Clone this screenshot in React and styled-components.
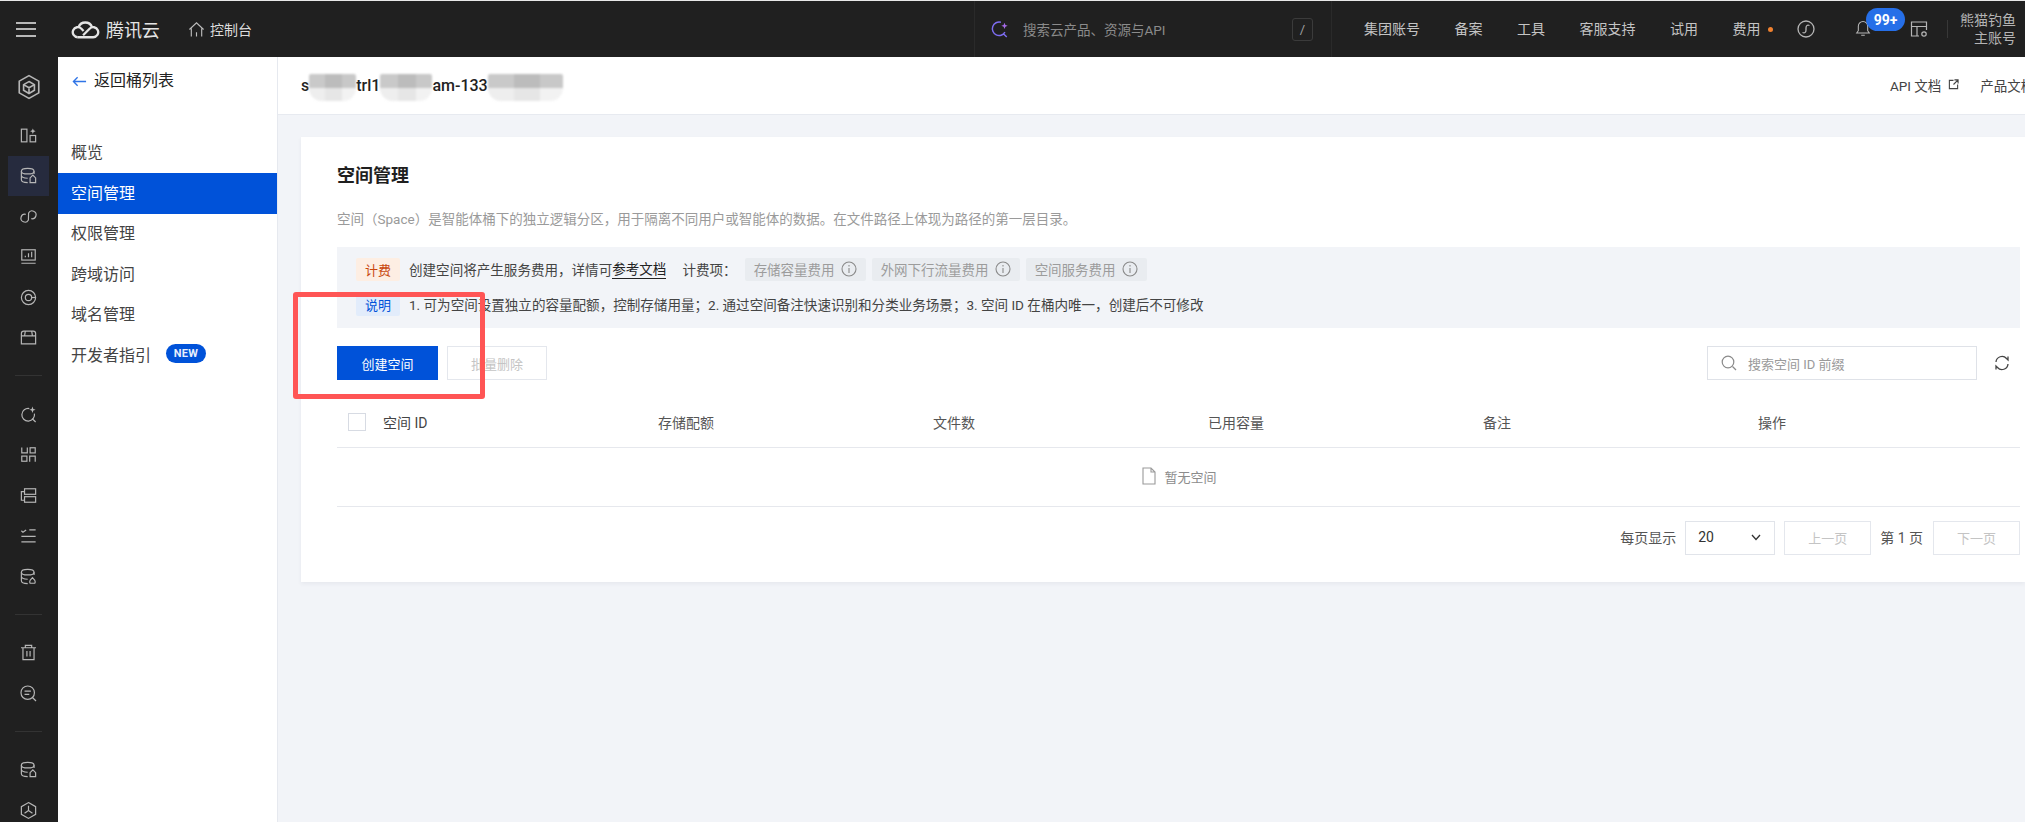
import React from "react";
import styled, { createGlobalStyle } from "styled-components";

const Global = createGlobalStyle`
  html, body { margin: 0; padding: 0; background: #f2f4f8; overflow: hidden; }
  body { font-family: Roboto, "Noto Sans CJK SC", sans-serif; color: #333; }
  * { box-sizing: border-box; }
`;

const Page = styled.div`
  position: relative; width: 2025px; height: 822px; overflow: hidden;
  display: flex; flex-direction: column; padding-top: 1px; background: #e8e8e8;
`;
const TopBar = styled.header`
  flex: 0 0 56px; height: 56px; background: #202020; display: flex; align-items: center; color: #c4c4c4;
`;
const Burger = styled.div`
  width: 20px; height: 15px; margin: 0 35px 0 16px; flex: none;
  border-top: 2px solid #b8b8b8; border-bottom: 2px solid #b8b8b8; position: relative;
  &::after { content: ""; position: absolute; left: 0; right: 0; top: 4.5px; height: 2px; background: #b8b8b8; }
`;
const LogoText = styled.span`
  font-size: 18px; color: #e4e4e4; margin-left: 6px; width: 53px; white-space: nowrap; letter-spacing: -0.1px; flex: none;
`;
const HomeLink = styled.div`
  display: flex; align-items: center; gap: 5px; margin-left: 29px; font-size: 14px; color: #dcdcdc; width: 64px; flex: none; white-space: nowrap;
`;
const SearchBlock = styled.div`
  margin-left: 722px; width: 358px; height: 56px; flex: none; display: flex; align-items: center;
  border-left: 1px solid #2a2a2a; border-right: 1px solid #2a2a2a; padding: 0 18px 0 16px;
`;
const SearchHint = styled.span`
  font-size: 13.5px; color: #8b8b8b; margin-left: 14px; flex: 1; white-space: nowrap;
`;
const SlashKey = styled.span`
  width: 21px; height: 23px; border: 1px solid #3b3b3b; border-radius: 3px; display: flex; align-items: center; justify-content: center;
  font-size: 13px; color: #a0a0a0;
`;
const TopMenu = styled.nav`
  margin-left: 32px; display: flex; align-items: center; gap: 34.5px; flex: none;
`;
const TopItem = styled.span`
  font-size: 14px; line-height: 20px; color: #c4c4c4; white-space: nowrap; position: relative;
`;
const OrangeDot = styled.i`
  position: absolute; left: 35px; top: 8px; width: 5px; height: 5px; border-radius: 50%; background: #f0812f;
`;
const TopIcons = styled.div`
  display: flex; align-items: center; margin-left: 36.5px; flex: none;
`;
const BellWrap = styled.div`
  position: relative; margin-left: 39px; width: 18px; height: 20px;
`;
const TopTool = styled.div`margin-left: 38px;`;
const Badge = styled.span`
  position: absolute; left: 12px; top: -11px; width: 39px; height: 23px; border-radius: 12px; background: #266fe8;
  color: #fff; font-size: 14px; font-weight: 700; display: flex; align-items: center; justify-content: center; white-space: nowrap;
`;
const TopDivider = styled.i`
  width: 1px; height: 18px; background: #383838; margin-left: 19px; flex: none;
`;
const Account = styled.div`
  margin-left: 12px; width: 56px; text-align: right; font-size: 14px; line-height: 18px; color: #b4b4b4; flex: none; white-space: nowrap;
`;

const Body = styled.div`flex: 1; display: flex; min-height: 0;`;
const Rail = styled.aside`
  flex: 0 0 58px; background: #202020; display: flex; flex-direction: column; padding-top: 10px;
`;
const RailItem = styled.div`
  width: 41px; height: 40.5px; margin-left: 8px; display: flex; align-items: center; justify-content: center; flex: none;
  background: ${p => (p.$active ? "#262b3e" : "transparent")};
  margin-top: ${p => p.$gap || 0}px;
`;
const RailDivider = styled.i`
  display: block; width: 27px; height: 1px; background: #333; margin: 17px 0 18px 15px; flex: none;
`;
const Nav = styled.nav`
  flex: 0 0 220px; background: #fff; border-right: 1px solid #e6e9ef; padding-top: 14px;
`;
const BackRow = styled.div`
  height: 20px; display: flex; align-items: center; gap: 7px; padding-left: 14px; font-size: 16px; color: #222; margin-bottom: 41.5px;
  line-height: 20px;
`;
const NavItem = styled.div`
  height: 40.5px; padding: 0 0 3px 13px; display: flex; align-items: center; font-size: 16px;
  color: ${p => (p.$active ? "#fff" : "#444")};
  background: ${p => (p.$active ? "#0052d9" : "transparent")};
`;
const NewTag = styled.span`
  margin-left: 15px; width: 40px; height: 19px; border-radius: 10px; background: #0052d9; color: #e8effc;
  font-size: 11px; font-weight: 700; display: flex; align-items: center; justify-content: center; letter-spacing: .3px;
`;

const Main = styled.main`flex: 1; display: flex; flex-direction: column; min-width: 0; background: #f2f4f8;`;
const Head = styled.div`
  flex: 0 0 58px; background: #fff; border-bottom: 1px solid #e7eaf0; display: flex; align-items: center; padding-left: 23px; white-space: nowrap;
`;
const BucketName = styled.div`
  font-size: 16px; font-weight: 500; color: #222; display: flex; align-items: center; flex: none; width: 1589px;
`;
const Blot = styled.span`
  display: inline-block; width: ${p => p.$w}px; height: 27px; margin-top: 3px; flex: none;
  border-radius: 2px 2px 13px 13px; filter: blur(.8px);
  background:
    linear-gradient(90deg, #c9c9c9 0 35%, #bcbcbc 35% 70%, #c8c8c8 70%) top / 100% 52% no-repeat,
    linear-gradient(90deg, #eeeeee 0 35%, #e6e6e6 35% 70%, #f2f2f2 70%) bottom / 100% 48% no-repeat;
`;
const HeadLink = styled.span`
  font-size: 13.5px; color: #444; display: inline-flex; align-items: center; gap: 7px; margin: 0 21px 2px 0; flex: none;
`;
const Card = styled.section`
  margin: 22px 0 0 23px; background: #fff; padding: 26px 5px 27px 36px; box-shadow: 0 2px 4px rgba(54, 58, 80, .06);
`;
const Title = styled.h2`
  margin: 0; font-size: 18px; line-height: 26px; font-weight: 700; color: #1f1f1f;
`;
const Desc = styled.p`
  margin: 20px 0 18px; font-size: 13.5px; line-height: 20px; color: #9a9a9a; white-space: nowrap;
`;
const Alert = styled.div`
  height: 81px; background: #f2f4f8; padding: 10.5px 19px; display: flex; flex-direction: column; gap: 12px;
`;
const AlertRow = styled.div`
  height: 23px; display: flex; align-items: center; font-size: 13.55px; color: #444; white-space: nowrap;
`;
const KindTag = styled.span`
  width: 44px; height: 23px; display: flex; align-items: center; justify-content: center; border-radius: 2px; font-size: 13px; margin-right: 9px; flex: none;
  color: ${p => (p.$blue ? "#0052d9" : "#c9480f")};
  background: ${p => (p.$blue ? "#e2ecfb" : "#fdeee3")};
`;
const DocLink = styled.span`color: #222; border-bottom: 1px solid #222; line-height: 18px;`;
const FeeLabel = styled.span`margin-left: 16px; margin-right: 8px;`;
const FeePill = styled.span`
  height: 23px; padding: 0 9px; background: #e9ecf0; border-radius: 2px; display: inline-flex; align-items: center; gap: 6px;
  color: #9c9c9c; font-size: 13.5px; margin-right: 6px;
`;
const Toolbar = styled.div`
  margin-top: 18px; height: 34px; display: flex; align-items: center; padding-right: 1px;
`;
const Primary = styled.button`
  width: 101px; height: 34px; border: 0; background: #0052d9; color: #fff; font: inherit; font-size: 13px; padding: 0;
`;
const Ghost = styled.button`
  width: 100px; height: 34px; margin-left: 9px; border: 1px solid #e4e7ed; background: #fff; color: #c4c4c4; font: inherit; font-size: 13px; padding: 0;
`;
const SearchBox = styled.div`
  margin-left: auto; width: 270px; height: 34px; border: 1px solid #dfe2e8; display: flex; align-items: center; padding-left: 13px; gap: 11px;
  font-size: 13px; color: #9a9a9a;
`;
const RefreshSlot = styled.div`
  width: 42px; display: flex; justify-content: flex-end; padding-right: 8px;
`;
const TableHead = styled.div`
  margin-top: 20px; height: 48px; border-bottom: 1px solid #e6e8ed; display: grid; grid-template-columns: 321px repeat(4, 275px) 1fr;
  align-items: center; padding-right: 1px; padding-bottom: 4px; font-size: 14px; color: #555;
`;
const FirstCol = styled.div`display: flex; align-items: center; padding-left: 11px; gap: 17px; color: #444;`;
const Check = styled.span`width: 18px; height: 18px; border: 1px solid #d7dbe3; background: #fff; flex: none;`;
const EmptyRow = styled.div`
  height: 59px; border-bottom: 1px solid #e6e8ed; display: flex; align-items: center; justify-content: center; gap: 6px;
  font-size: 13px; color: #8c8c8c; padding-bottom: 2px;
`;
const Pager = styled.div`
  margin-top: 14px; height: 34px; display: flex; align-items: center; justify-content: flex-end; font-size: 14px; color: #555;
`;
const PagerLabel = styled.span`padding-bottom: 3px; white-space: nowrap;`;
const SelectBox = styled.div`
  width: 90px; height: 34px; margin-left: 9px; border: 1px solid #e1e4ea; display: flex; align-items: center; justify-content: space-between;
  padding: 0 12px 2px; font-size: 14px; color: #333;
`;
const PageBtn = styled.span`
  width: 87px; height: 34px; margin: 0 9px; padding-bottom: 2px; border: 1px solid #e4e7ed; display: flex; align-items: center; justify-content: center; color: #c4c4c4; font-size: 13px;
  &:last-child { margin-right: 0; margin-left: 10px; }
`;
const Callout = styled.div`
  position: absolute; left: 293px; top: 292px; width: 192px; height: 107px; border: 5px solid #ff5555; border-radius: 3px; pointer-events: none;
`;

const Ico = styled.svg`
  width: ${p => p.$s || 20}px; height: ${p => p.$s || 20}px; flex: none; fill: none;
  stroke: ${p => p.$c || "#b6b6b6"}; stroke-width: ${p => p.$w || 1.5}; display: block;
`;

const rail = {
  hex: <><path d="M12 1.5 21 6.6v10.8L12 22.5 3 17.4V6.6z"/><path d="M12 7l5 2.8v5.2L12 18l-5-3V9.800zM7 9.800l5 2.900 5-2.900M12 12.700V18"/></>,
  board: <><rect x="3" y="4" width="7" height="16" /><rect x="14" y="12" width="7" height="8"/><path d="M17.500 3l1 2.500 2.500 1-2.500 1-1 2.500-1-2.500-2.500-1 2.500-1z" fill="#b6b6b6" stroke="none"/></>,
  db: <><ellipse cx="11" cy="6.500" rx="8" ry="3.500"/><path d="M3 6.500v11c0 2 3.500 3.500 8 3.500M19 6.500V10M3 12c0 2 3.500 3.300 8 3.500"/><path d="M14 21v-6l3.500-3.500L21 15v6z"/></>,
  link: <><path d="M10 8a5 5 0 1 0 0 8l4-8a5 5 0 1 1 0 8" transform="rotate(-25 12 12)"/></>,
  chart: <><rect x="3.500" y="3.500" width="17" height="13"/><path d="M3 20.500h18M8 13v-2M12 13V8M16 13V6"/></>,
  ring: <><circle cx="12" cy="12" r="9"/><circle cx="12" cy="12" r="4"/><path d="M16 12h5"/></>,
  box: <><path d="M3 10V7a3 3 0 0 1 3-3h12a3 3 0 0 1 3 3v13H3zM3 10h18M8 4l-1 6M16 4l1 6"/></>,
  spark: <><path d="M13 4.500A8 8 0 1 0 19.500 11M16.500 17l4.500 4.500"/><path d="M17 2l1.100 3 2.900 1-2.900 1L17 10l-1.100-3-2.900-1 2.900-1z" fill="#b6b6b6" stroke="none"/></>,
  apps: <><rect x="14" y="3.500" width="6.500" height="6.500"/><rect x="3.500" y="14" width="6.500" height="6.500"/><path d="M3.500 3v7h7V3M13.500 21v-7h7v7"/></>,
  stack: <><rect x="7" y="3.500" width="14" height="7"/><rect x="7" y="13.500" width="14" height="7"/><path d="M7 7H3v11h4"/></>,
  checks: <><path d="M3 6l2 2 4-3M13 5h8M3 13h18M3 20h18"/></>,
  dbDrop: <><ellipse cx="11" cy="6.500" rx="8" ry="3.500"/><path d="M3 6.500v11c0 2 3.500 3.500 8 3.500M19 6.500V10M3 12c0 2 3.500 3.300 8 3.500"/><path d="M14 20.500a3.500 3.500 0 0 1 0-3.500l3-3.500 3 3.500a3.500 3.500 0 0 1 0 3.500z"/></>,
  trash: <><path d="M2.500 6h19M8 6V3h8v3M5 6v15h14V6M10 10v7M14 10v7"/></>,
  findText: <><circle cx="11" cy="11" r="8.500"/><path d="M17 17l4.500 4.500M7 9h8M7 13h6"/></>,
  dbHome: <><ellipse cx="11" cy="6.500" rx="8" ry="3.500"/><path d="M3 6.500v11c0 2 3.500 3.500 8 3.500M19 6.500V10M3 12c0 2 3.500 3.300 8 3.500"/><path d="M14 21v-5l3.500-3.500L21 16v5z"/></>,
  hexY: <><path d="M12 2l9 5.200v9.600L12 22l-9-5.200V7.200z"/><path d="M12 6v6M12 12l-5 3.500M12 12l5 3.500"/></>,
};
const RailIcon = ({ name }) => <Ico viewBox="0 0 24 24" $s={name === "hex" ? 26 : 19}>{rail[name]}</Ico>;

const Blotted = () => (
  <BucketName>
    s<Blot $w={47} />trl1<Blot $w={52} />am-133<Blot $w={75} />
  </BucketName>
);

const Info = () => (
  <Ico viewBox="0 0 16 16" $s={16} $c="#8a8a8a" $w={1.1}>
    <circle cx="8" cy="8" r="7" /><path d="M8 7v5M8 4v1.500" />
  </Ico>
);

export default function App() {
  return (
    <>
      <Global />
      <Page>
        <TopBar>
          <Burger />
          <Ico viewBox="0 0 30 22" $s={29} $c="#e4e4e4" $w={2.4}>
            <path d="M7 19h16a5.200 5.200 0 1 0-3.800-8.800L12.500 17" />
            <path d="M7 19a5.200 5.200 0 1 1 3.800-8.800L13 12.500" />
            <path d="M7.800 8.600A7.500 7.500 0 0 1 21.800 8.600" />
          </Ico>
          <LogoText>腾讯云</LogoText>
          <HomeLink>
            <Ico viewBox="0 0 18 18" $s={17} $c="#bdbdbd" $w={1.2}>
              <path d="M1.500 9 9 2l7.500 7M3.500 8v8.500M14.500 8v8.500M9 12v4.500" />
            </Ico>
            控制台
          </HomeLink>
          <SearchBlock>
            <Ico viewBox="0 0 20 20" $s={18} $c="#7d6df0" $w={1.6}>
              <path d="M11 2.500a7.500 7.500 0 1 0 4.500 11M13.500 15l4 4" />
              <path d="M15 3l1 2.500 2.500 1-2.500 1-1 2.500-1-2.500-2.500-1 2.500-1z" fill="#a56be8" stroke="none" />
            </Ico>
            <SearchHint>搜索云产品、资源与API</SearchHint>
            <SlashKey>/</SlashKey>
          </SearchBlock>
          <TopMenu>
            <TopItem>集团账号</TopItem>
            <TopItem>备案</TopItem>
            <TopItem>工具</TopItem>
            <TopItem>客服支持</TopItem>
            <TopItem>试用</TopItem>
            <TopItem>费用<OrangeDot /></TopItem>
          </TopMenu>
          <TopIcons>
            <Ico viewBox="0 0 18 18" $s={18} $c="#b6b6b6" $w={1.3}>
              <circle cx="9" cy="9" r="8" /><path d="M12.500 5.500c-2.500-1-3.500.5-3.500 2.500v2c0 2-1 3.500-3.500 2.500" />
            </Ico>
            <BellWrap>
              <Ico viewBox="0 0 18 20" $s={18} $c="#b6b6b6" $w={1.2}>
                <path d="M2 15.500h14l-1.800-2.500V8A5.200 5.200 0 0 0 3.800 8v5zM7 18h4" />
              </Ico>
              <Badge>99+</Badge>
            </BellWrap>
            <TopTool>
              <Ico viewBox="0 0 18 18" $s={18} $c="#b6b6b6" $w={1.2}>
                <path d="M9 16H1.500V2h15v8M1.500 6.500h15M7 6.500V16" /><circle cx="14" cy="14" r="2.200" />
              </Ico>
            </TopTool>
            <TopDivider />
            <Account>熊猫钓鱼<br />主账号</Account>
          </TopIcons>
        </TopBar>
        <Body>
          <Rail>
            <RailItem><RailIcon name="hex" /></RailItem>
            <RailItem $gap={7.5}><RailIcon name="board" /></RailItem>
            <RailItem $active><RailIcon name="db" /></RailItem>
            <RailItem><RailIcon name="link" /></RailItem>
            <RailItem><RailIcon name="chart" /></RailItem>
            <RailItem><RailIcon name="ring" /></RailItem>
            <RailItem><RailIcon name="box" /></RailItem>
            <RailDivider />
            <RailItem><RailIcon name="spark" /></RailItem>
            <RailItem><RailIcon name="apps" /></RailItem>
            <RailItem><RailIcon name="stack" /></RailItem>
            <RailItem><RailIcon name="checks" /></RailItem>
            <RailItem><RailIcon name="dbDrop" /></RailItem>
            <RailDivider />
            <RailItem><RailIcon name="trash" /></RailItem>
            <RailItem><RailIcon name="findText" /></RailItem>
            <RailDivider />
            <RailItem><RailIcon name="dbHome" /></RailItem>
            <RailItem><RailIcon name="hexY" /></RailItem>
          </Rail>
          <Nav>
            <BackRow>
              <Ico viewBox="0 0 16 12" $s={15} $c="#2f74e6" $w={1.4}><path d="M15 6H1.500M6 1.500 1.500 6 6 10.500" /></Ico>
              返回桶列表
            </BackRow>
            <NavItem>概览</NavItem>
            <NavItem $active>空间管理</NavItem>
            <NavItem>权限管理</NavItem>
            <NavItem>跨域访问</NavItem>
            <NavItem>域名管理</NavItem>
            <NavItem>开发者指引<NewTag>NEW</NewTag></NavItem>
          </Nav>
          <Main>
            <Head>
              <Blotted />
              <HeadLink>
                API 文档
                <Ico viewBox="0 0 12 12" $s={11} $c="#444" $w={1.2}><path d="M6 1.500H1.500v9h9V6M7 1h4v4M11 1 6 6" /></Ico>
              </HeadLink>
              <HeadLink>产品文档</HeadLink>
            </Head>
            <Card>
              <Title>空间管理</Title>
              <Desc>空间（Space）是智能体桶下的独立逻辑分区，用于隔离不同用户或智能体的数据。在文件路径上体现为路径的第一层目录。</Desc>
              <Alert>
                <AlertRow>
                  <KindTag>计费</KindTag>
                  创建空间将产生服务费用，详情可<DocLink>参考文档</DocLink>
                  <FeeLabel>计费项：</FeeLabel>
                  <FeePill>存储容量费用<Info /></FeePill>
                  <FeePill>外网下行流量费用<Info /></FeePill>
                  <FeePill>空间服务费用<Info /></FeePill>
                </AlertRow>
                <AlertRow>
                  <KindTag $blue>说明</KindTag>
                  1. 可为空间设置独立的容量配额，控制存储用量；2. 通过空间备注快速识别和分类业务场景；3. 空间 ID 在桶内唯一，创建后不可修改
                </AlertRow>
              </Alert>
              <Toolbar>
                <Primary>创建空间</Primary>
                <Ghost>批量删除</Ghost>
                <SearchBox>
                  <Ico viewBox="0 0 16 16" $s={16} $c="#8a8a8a" $w={1.2}><circle cx="7" cy="7" r="5.800" /><path d="M11.500 11.500 15 15" /></Ico>
                  搜索空间 ID 前缀
                </SearchBox>
                <RefreshSlot>
                  <Ico viewBox="0 0 18 18" $s={18} $c="#444" $w={1.3}>
                    <path d="M3 8a6 6 0 0 1 10.500-3.500L15 6V2.500M15 10a6 6 0 0 1-10.500 3.500L3 12v3.500" />
                  </Ico>
                </RefreshSlot>
              </Toolbar>
              <TableHead>
                <FirstCol><Check />空间 ID</FirstCol>
                <span>存储配额</span>
                <span>文件数</span>
                <span>已用容量</span>
                <span>备注</span>
                <span>操作</span>
              </TableHead>
              <EmptyRow>
                <Ico viewBox="0 0 14 18" $s={18} $c="#9a9a9a" $w={1.1}><path d="M1 1h8l4 4v12H1zM9 1v4h4" /></Ico>
                暂无空间
              </EmptyRow>
              <Pager>
                <PagerLabel>每页显示</PagerLabel>
                <SelectBox>
                  20
                  <Ico viewBox="0 0 12 12" $s={12} $c="#333" $w={1.3}><path d="M2 4l4 4.500L10 4" /></Ico>
                </SelectBox>
                <PageBtn>上一页</PageBtn>
                <PagerLabel>第 1 页</PagerLabel>
                <PageBtn>下一页</PageBtn>
              </Pager>
            </Card>
          </Main>
        </Body>
        <Callout />
      </Page>
    </>
  );
}
